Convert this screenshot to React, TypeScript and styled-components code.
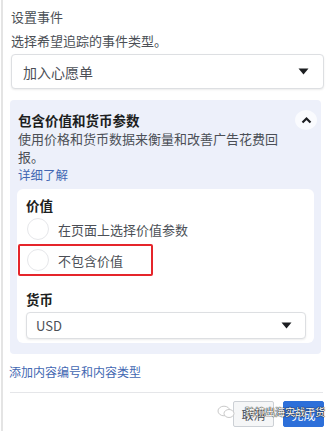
import React from "react";
import styled, { createGlobalStyle } from "styled-components";

const Global = createGlobalStyle`
  html, body { margin: 0; padding: 0; background: #fff; }
  body {
    font-family: "Noto Sans CJK SC", "Noto Sans", sans-serif;
    color: #4b4f56;
  }
  * { box-sizing: border-box; }
`;

const Page = styled.div`
  position: relative;
  width: 329px;
  height: 431px;
  margin-left: 1px;
  border-left: 2px solid #e4e4e4;
  padding: 0 6px 0 7px;
  overflow: hidden;
`;

const Title = styled.div`
  margin-top: 8px;
  padding-left: 1px;
  font-size: 13px;
  line-height: 18px;
  color: #4b4f56;
`;

const Hint = styled.div`
  margin-top: 6px;
  padding-left: 1px;
  font-size: 13px;
  line-height: 18px;
  color: #4b4f56;
`;

const Select = styled.div<{ $h: number; $fs: number; $pl: number; $pr: number }>`
  display: flex;
  align-items: center;
  justify-content: space-between;
  height: ${(p) => p.$h}px;
  padding: 0 ${(p) => p.$pr}px 0 ${(p) => p.$pl}px;
  background: #fff;
  border: 1px solid #dddfe2;
  border-radius: 4px;
  box-shadow: 0 1px 2px rgba(0, 0, 0, 0.08);
  font-size: ${(p) => p.$fs}px;
  color: #4b4f56;
`;

const EventSelect = styled(Select)`
  margin-top: 4px;
  margin-left: 1px;
`;

const Caret = () => (
  <svg width="11" height="7" viewBox="0 0 11 7">
    <path d="M0.5 0.5 L10.5 0.5 L5.5 6.5 Z" fill="#1c1e21" />
  </svg>
);

const Panel = styled.div`
  margin-top: 11px;
  margin-right: 3px;
  background: #edf0fa;
  border-radius: 4px;
  padding: 10px 7px 11px 7px;
`;

const PanelHead = styled.div`
  display: flex;
  align-items: center;
  justify-content: space-between;
  padding-left: 1px;
`;

const PanelTitle = styled.div`
  font-size: 13.5px;
  line-height: 18px;
  font-weight: 700;
  color: #1c1e21;
`;

const Toggle = styled.div`
  width: 22px;
  height: 20px;
  margin-right: -3px;
  border-radius: 50%;
  background: rgba(255, 255, 255, 0.7);
  display: flex;
  align-items: center;
  justify-content: center;
`;

const Desc = styled.div`
  padding-left: 1px;
  padding-right: 30px;
  font-size: 13px;
  line-height: 18px;
  color: #4b4f56;
`;

const Link = styled.a`
  display: block;
  font-size: 12.5px;
  line-height: 18px;
  color: #4267b2;
  text-decoration: none;
`;

const LearnMore = styled(Link)`
  padding-left: 1px;
`;

const Inner = styled.div`
  margin-top: 5px;
  background: #fff;
  border-radius: 6px;
  padding: 7px 8px 4px 9px;
`;

const Label = styled.div<{ $mt: number }>`
  margin-top: ${(p) => p.$mt}px;
  font-size: 13.5px;
  line-height: 18px;
  font-weight: 700;
  color: #1c1e21;
`;

const RadioRow = styled.div<{ $h: number }>`
  position: relative;
  display: flex;
  align-items: center;
  gap: 9px;
  height: ${(p) => p.$h}px;
  padding-left: 1px;
  font-size: 13px;
  color: #4b4f56;
`;

const Circle = styled.span`
  width: 22px;
  height: 22px;
  border-radius: 50%;
  border: 1px solid #e6e7ea;
  background: #fff;
  flex: none;
`;

const Highlight = styled.div`
  position: absolute;
  left: -8px;
  top: 0;
  width: 135px;
  height: 32px;
  border: 2px solid #e5252b;
  border-radius: 2px;
  pointer-events: none;
`;

const CurrencySelect = styled(Select)`
  margin-top: 4px;
`;

const AddLink = styled(Link)`
  margin-top: 9px;
  margin-left: -1px;
  font-size: 12px;
`;

const Divider = styled.div`
  margin-top: 11px;
  margin-right: 1px;
  height: 1px;
  background: #e5e6e9;
`;

const Footer = styled.div`
  display: flex;
  justify-content: flex-end;
  gap: 9px;
  margin-top: 8px;
`;

const Button = styled.button<{ $primary?: boolean }>`
  width: 41px;
  height: 26px;
  border-radius: 2px;
  font-family: inherit;
  font-size: 12px;
  padding: 0;
  border: 1px solid ${(p) => (p.$primary ? "#2d6fd9" : "#ccd0d5")};
  background: ${(p) => (p.$primary ? "#2d6fd9" : "#f5f6f7")};
  color: ${(p) => (p.$primary ? "#fff" : "#4b4f56")};
`;

const Watermark = styled.div`
  position: absolute;
  left: 214px;
  top: 405px;
  display: flex;
  align-items: center;
  gap: 10px;
  pointer-events: none;
`;

const WatermarkText = styled.span`
  font-size: 10px;
  line-height: 14px;
  color: #fff;
  text-shadow: 0 0 1px #222, 0 0 1px #222, 0 0 1px #222;
`;

const WeChat = () => (
  <svg width="18" height="14" viewBox="0 0 18 14">
    <ellipse cx="7" cy="6" rx="6" ry="4.8" fill="none" stroke="#c9c9c9" strokeWidth="1" />
    <ellipse cx="12" cy="8.5" rx="5" ry="4" fill="#fff" stroke="#c9c9c9" strokeWidth="1" />
  </svg>
);

export default function App() {
  return (
    <>
      <Global />
      <Page>
        <Title>设置事件</Title>
        <Hint>选择希望追踪的事件类型。</Hint>
        <EventSelect $h={35} $fs={14} $pl={11} $pr={14}>
          <span>加入心愿单</span>
          <Caret />
        </EventSelect>
        <Panel>
          <PanelHead>
            <PanelTitle>包含价值和货币参数</PanelTitle>
            <Toggle>
              <svg width="11" height="8" viewBox="0 0 11 8">
                <path d="M1.5 6.5 L5.5 2.5 L9.5 6.5" fill="none" stroke="#1c1e21" strokeWidth="2.2" />
              </svg>
            </Toggle>
          </PanelHead>
          <Desc>使用价格和货币数据来衡量和改善广告花费回报。</Desc>
          <LearnMore href="#">详细了解</LearnMore>
          <Inner>
            <Label $mt={0}>价值</Label>
            <RadioRow $h={30}>
              <Circle />
              <span>在页面上选择价值参数</span>
            </RadioRow>
            <RadioRow $h={32}>
              <Circle />
              <span>不包含价值</span>
              <Highlight />
            </RadioRow>
            <Label $mt={14}>货币</Label>
            <CurrencySelect $h={27} $fs={13} $pl={9} $pr={13}>
              <span>USD</span>
              <Caret />
            </CurrencySelect>
          </Inner>
        </Panel>
        <AddLink href="#">添加内容编号和内容类型</AddLink>
        <Divider />
        <Footer>
          <Button>取消</Button>
          <Button $primary>完成</Button>
        </Footer>
        <Watermark>
          <WeChat />
          <WatermarkText>跨境出海实战干货</WatermarkText>
        </Watermark>
      </Page>
    </>
  );
}
